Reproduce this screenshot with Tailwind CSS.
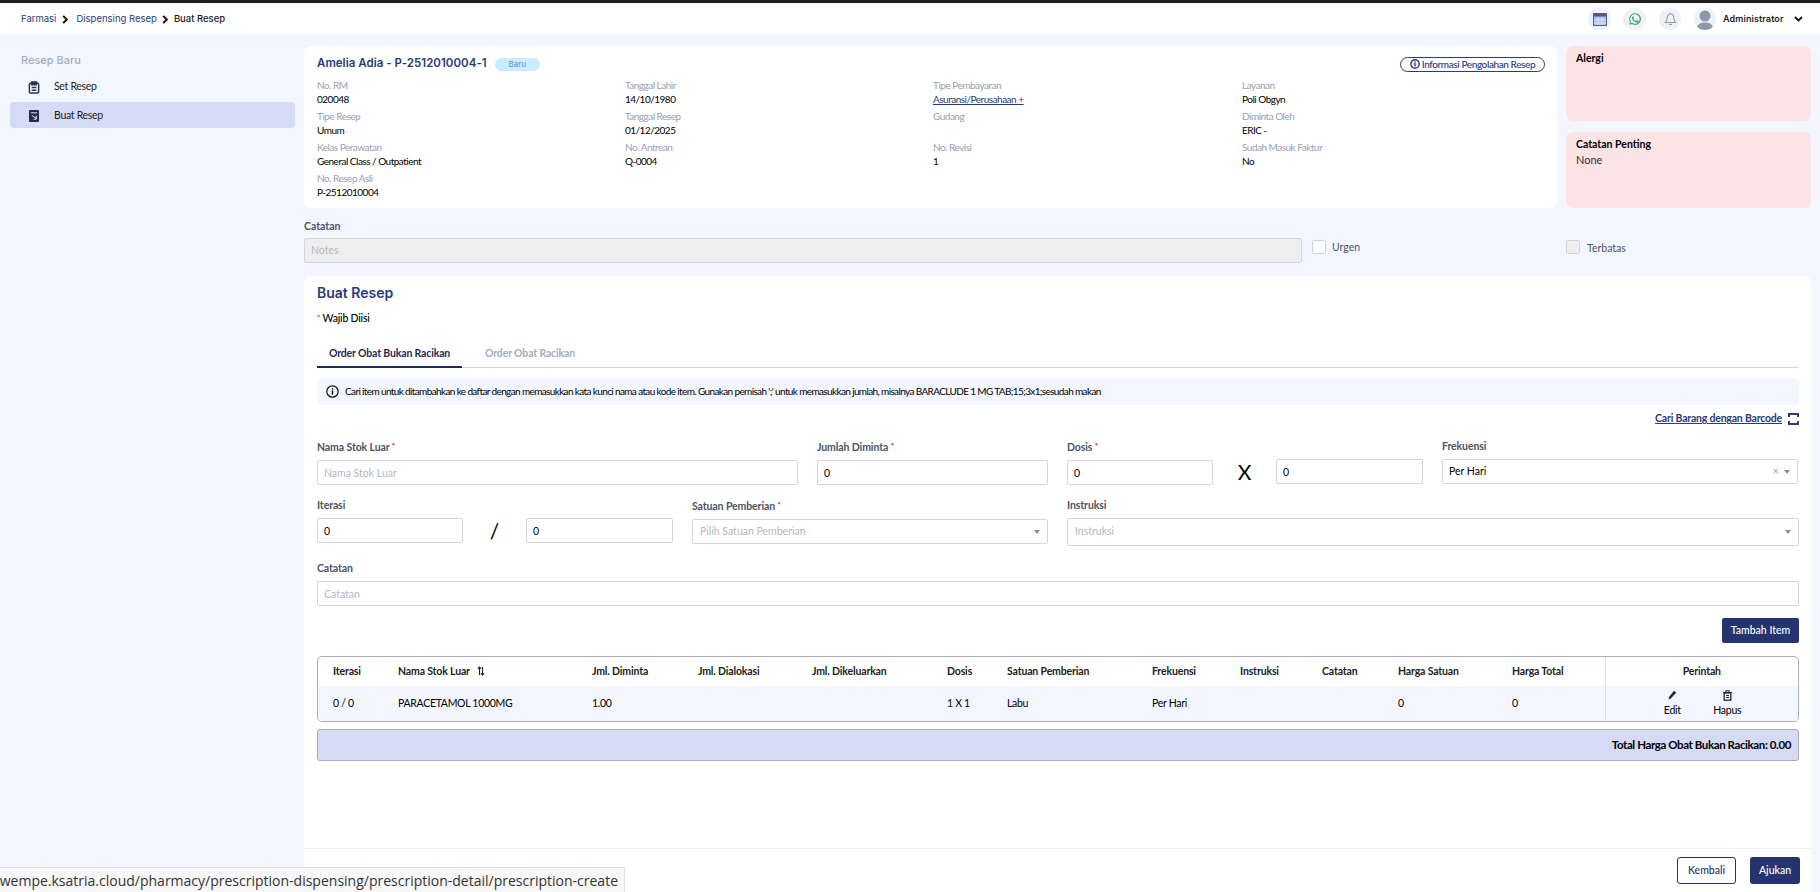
<!DOCTYPE html>
<html>
<head>
  <title>Buat Resep</title>
  <meta name="viewport" content="initial-scale=1, width=device-width">
  <script src="https://cdn.jsdelivr.net/npm/@tailwindcss/browser@4"></script>
</head>
<body class="h-screen w-screen overflow-hidden bg-[#f3f6fe] font-['Lato',sans-serif] text-[11px] text-black relative">
  <div class="h-[3px] bg-[#1f1f1f]"></div>
  <!-- top bar -->
  <header class="h-[32px] bg-white flex items-center justify-between pl-[21px] pr-[14px] font-['Inter',sans-serif] shadow-[0_1px_1px_rgba(0,0,0,0.03)]">
    <nav class="flex items-center text-[9.5px] text-[#2a3a7c]">
      <span>Farmasi</span>
      <svg class="w-[8px] h-[9px] ml-[5px] mr-[7px]" viewBox="0 0 8 10" fill="none" stroke="#111" stroke-width="2.2"><path d="M2 1l4 4-4 4"/></svg>
      <span>Dispensing Resep</span>
      <svg class="w-[8px] h-[9px] ml-[4px] mr-[5px]" viewBox="0 0 8 10" fill="none" stroke="#111" stroke-width="2.2"><path d="M2 1l4 4-4 4"/></svg>
      <span class="font-medium text-[#1c1c1c]">Buat Resep</span>
    </nav>
    <div class="flex items-center">
      <div class="w-[23px] h-[22px] rounded-full bg-[#eef1f6] flex items-center justify-center">
        <svg class="w-[14px] h-[13px]" viewBox="0 0 14 13"><rect x="0.5" y="0.5" width="13" height="12" fill="#a9bbf5" stroke="#59657f"/><rect x="0.5" y="0.5" width="13" height="3" fill="#4f5b78"/><path d="M5 4v8M9 4v8M1 7h12M1 10h12" stroke="#e7ecff"/></svg>
      </div>
      <div class="w-[23px] h-[22px] rounded-full bg-[#eef1f6] flex items-center justify-center ml-[12px]">
        <svg class="w-[14px] h-[14px]" viewBox="0 0 24 24" fill="#3fa66b"><path d="M12 2a10 10 0 0 0-8.6 15L2 22l5.2-1.4A10 10 0 1 0 12 2zm0 2a8 8 0 1 1-4.3 14.7l-.4-.2-3 .8.8-2.9-.2-.4A8 8 0 0 1 12 4zM8.6 7.5c-.3 0-.6.1-.9.5-.4.5-1 1.100-1 2.400s1 2.600 1.100 2.800c.2.200 2 3.100 4.800 4.200 2.400.9 2.900.7 3.400.7.500-.1 1.700-.7 1.900-1.400.200-.700.200-1.200.200-1.300-.1-.2-.3-.2-.6-.4l-2-.9c-.3-.1-.5-.2-.7.100l-.9 1.200c-.2.200-.4.200-.7.100-.3-.2-1.200-.5-2.300-1.400-.9-.8-1.400-1.700-1.600-2-.2-.3 0-.5.100-.6l.5-.6c.2-.2.200-.3.300-.5.100-.2 0-.4 0-.5l-.9-2.100c-.2-.5-.4-.5-.7-.5z"/></svg>
      </div>
      <div class="w-[22px] h-[22px] rounded-full bg-[#eef1f6] flex items-center justify-center ml-[13px]">
        <svg class="w-[13px] h-[14px]" viewBox="0 0 14 15" fill="none" stroke="#8d97a8" stroke-width="1.1"><path d="M7 2.200c-2.300 0-3.500 1.800-3.500 4 0 2.600-1 3.900-2 5h11c-1-1.100-2-2.400-2-5 0-2.200-1.200-4-3.500-4z"/><path d="M7 .8v1.400M5.500 12.800c.4.900 2.600.9 3 0"/></svg>
      </div>
      <div class="w-[22px] h-[22px] rounded-full bg-[#eef1f6] overflow-hidden ml-[13px]">
        <svg class="w-[22px] h-[22px]" viewBox="0 0 22 22" fill="#8d99a9"><circle cx="11" cy="8" r="5.500"/><path d="M2.500 22c0-5 3-7.500 8.500-7.500s8.500 2.500 8.500 7.500z"/></svg>
      </div>
      <span class="ml-[7px] text-[9px] font-semibold text-[#1c1c1c] tracking-[0.1px] w-[63px]">Administrator</span>
      <svg class="w-[9px] h-[6px] ml-[8px] mr-[3px]" viewBox="0 0 9 6" fill="none" stroke="#111" stroke-width="1.800"><path d="M1 1l3.500 3.500L8 1"/></svg>
    </div>
  </header>

  <div class="flex">
    <!-- sidebar -->
    <aside class="w-[304px] shrink-0 pl-[10px] pr-[9px] pt-[17px]">
      <div class="pl-[11px] font-['Inter',sans-serif] text-[11px] font-medium text-[#a3adc2] leading-[16px]">Resep Baru</div>
      <div class="mt-[3px] flex items-center h-[30px] pt-[2px] pl-[18px] text-[#1c1c1c] text-[10.500px] tracking-[-0.3px]">
        <svg class="w-[12px] h-[13px]" viewBox="0 0 13 14" fill="none" stroke="#2b3346" stroke-width="1.600"><rect x="1.500" y="2.500" width="10" height="10.500" rx="1"/><rect x="4" y="1" width="5" height="3" fill="#2b3346"/><path d="M4 7h5M4 10h5"/></svg>
        <span class="ml-[14px]">Set Resep</span>
      </div>
      <div class="mt-[1px] flex items-center h-[26px] pt-[2px] pl-[19px] rounded-[4px] bg-[#d6dbf5] text-[#1c1c1c] text-[10.500px] tracking-[-0.3px]">
        <svg class="w-[10px] h-[12px]" viewBox="0 0 11 13"><rect width="11" height="13" rx="1" fill="#1f2a4d"/><path d="M2 3h7M3 6l5 3M8 6v4H5" stroke="#fff" stroke-width="1" fill="none"/></svg>
        <span class="ml-[15px]">Buat Resep</span>
      </div>
    </aside>

    <main class="w-[1507px] shrink-0 pt-[11px]">
      <!-- patient summary -->
      <div class="flex gap-[9px] h-[162px]">
        <section class="w-[1253px] bg-white rounded-[7px] pt-[10px] px-[13px] relative">
          <div class="flex items-center h-[16px]">
            <h1 class="font-['Inter',sans-serif] text-[11.500px] font-semibold text-[#2a3a7c] tracking-[0.03px]">Amelia Adia - P-2512010004-1</h1>
            <span class="ml-[8px] w-[45px] h-[13px] rounded-full bg-[#c9ecff] text-[#5b8fd9] text-[8px] font-['Inter',sans-serif] flex items-center justify-center">Baru</span>
            <span class="ml-auto -mr-[1px] h-[15px] w-[145px] rounded-full border border-[#2a3a7c] text-[#2a3a7c] text-[10px] tracking-[-0.4px] font-medium flex items-center justify-center">
              <svg class="w-[10px] h-[10px] mr-[2px]" viewBox="0 0 10 10"><circle cx="5" cy="5" r="4.200" fill="none" stroke="#2a3a7c" stroke-width="1.400"/><rect x="4.300" y="4" width="1.400" height="3.500" fill="#2a3a7c"/><rect x="4.300" y="2.300" width="1.400" height="1.200" fill="#2a3a7c"/></svg>
              Informasi Pengolahan Resep
            </span>
          </div>
          <div class="grid grid-cols-[308px_308px_309px_1fr] auto-rows-[31px] mt-[6px] leading-[14px] text-[10px] tracking-[-0.5px]">
            <div><div class="text-[#97a1b3]">No. RM</div><div>020048</div></div>
            <div><div class="text-[#97a1b3]">Tanggal Lahir</div><div>14/10/1980</div></div>
            <div><div class="text-[#97a1b3]">Tipe Pembayaran</div><div class="underline text-[#2a3a7c]">Asuransi/Perusahaan +</div></div>
            <div><div class="text-[#97a1b3]">Layanan</div><div>Poli Obgyn</div></div>
            <div><div class="text-[#97a1b3]">Tipe Resep</div><div>Umum</div></div>
            <div><div class="text-[#97a1b3]">Tanggal Resep</div><div>01/12/2025</div></div>
            <div><div class="text-[#97a1b3]">Gudang</div></div>
            <div><div class="text-[#97a1b3]">Diminta Oleh</div><div>ERIC -</div></div>
            <div><div class="text-[#97a1b3]">Kelas Perawatan</div><div>General Class / Outpatient</div></div>
            <div><div class="text-[#97a1b3]">No. Antrean</div><div>Q-0004</div></div>
            <div><div class="text-[#97a1b3]">No. Revisi</div><div>1</div></div>
            <div><div class="text-[#97a1b3]">Sudah Masuk Faktur</div><div>No</div></div>
            <div><div class="text-[#97a1b3]">No. Resep Asli</div><div>P-2512010004</div></div>
          </div>
        </section>
        <div class="w-[245px] flex flex-col gap-[11px]">
          <div class="h-[75px] rounded-[7px] bg-[#fde4e4] pt-[5px] px-[10px] font-bold text-[10.500px] leading-[14px]">Alergi</div>
          <div class="h-[76px] rounded-[7px] bg-[#fde4e4] pt-[5px] px-[10px] leading-[14px]">
            <div class="font-bold text-[10.500px]">Catatan Penting</div>
            <div class="mt-[2px] text-[#3a2b2b]">None</div>
          </div>
        </div>
      </div>

      <!-- notes row -->
      <div class="mt-[10px] flex">
        <div class="w-[998px]">
          <label class="block text-[#4b5563] font-bold text-[10.500px] leading-[16px]">Catatan</label>
          <div class="mt-[4px] h-[25px] pt-[1px] rounded-[2px] border border-[#d4d6da] bg-[#eeeeee] pl-[6px] flex items-center text-[#b4b8bf] text-[10.500px]">Notes</div>
        </div>
        <div class="w-[264px] pl-[10px] pt-[22px] flex items-start">
          <span class="w-[14px] h-[14px] rounded-[2px] border border-[#cfd3da] bg-white"></span>
          <span class="ml-[6px] text-[#4b5563] text-[10.500px] leading-[14px]">Urgen</span>
        </div>
        <div class="pt-[22px] flex items-start">
          <span class="w-[14px] h-[14px] rounded-[2px] border border-[#d0d3d8] bg-[#eeeeee]"></span>
          <span class="ml-[7px] text-[#4b5563] text-[10.500px] leading-[14px] pt-[1px]">Terbatas</span>
        </div>
      </div>

      <!-- form card -->
      <section class="mt-[13px] bg-white rounded-t-[7px] w-[1507px] h-[572px] px-[13px] pt-[8px]">
        <h2 class="font-['Inter',sans-serif] text-[14px] font-semibold text-[#2a3a7c] leading-[17px]">Buat Resep</h2>
        <p class="mt-[10px] text-[10.500px] font-medium leading-[14px] tracking-[-0.2px]"><span class="text-red-600 text-[8px] align-[1px]">*</span> Wajib Diisi</p>
        <div class="mt-[18px] flex h-[25px] border-b border-[#d4d6da] w-[1482px] font-bold text-[10.500px] tracking-[-0.15px]">
          <div class="w-[145px] h-[25px] border-b-2 border-[#1f2a55] text-center text-[#1f2a55] pt-[3px]">Order Obat Bukan Racikan</div>
          <div class="ml-[23px] text-[#a3adbd] pt-[3px]">Order Obat Racikan</div>
        </div>

        <div class="mt-[10px] w-[1482px] h-[27px] rounded-[5px] bg-[#f3f6fe] flex items-center pl-[9px] text-[10px] tracking-[-0.63px]">
          <svg class="w-[13px] h-[13px]" viewBox="0 0 13 13"><circle cx="6.500" cy="6.500" r="5.700" fill="none" stroke="#111" stroke-width="1.200"/><rect x="5.800" y="5.500" width="1.400" height="4.200"/><rect x="5.800" y="3.200" width="1.400" height="1.400"/></svg>
          <span class="ml-[6px]">Cari item untuk ditambahkan ke daftar dengan memasukkan kata kunci nama atau kode item. Gunakan pemisah ';' untuk memasukkan jumlah, misalnya BARACLUDE 1 MG TAB;15;3x1;sesudah makan</span>
        </div>

        <div class="mt-[7px] w-[1482px] flex justify-end items-center h-[14px]">
          <span class="underline text-[#2a3a7c] font-bold text-[10.500px] tracking-[-0.2px]">Cari Barang dengan Barcode</span>
          <svg class="w-[11px] h-[12px] ml-[6px]" viewBox="0 0 11 12" fill="none" stroke="#2a3a7c" stroke-width="2"><path d="M1 4V1h9v3M1 8v3h9V8"/></svg>
        </div>

        <!-- row 1 -->
        <div class="mt-[13px] w-[1482px] flex text-[10.500px]">
          <div class="w-[481px]">
            <label class="block font-bold text-[#4b5563] leading-[14px] tracking-[-0.1px]">Nama Stok Luar <span class="text-red-600 text-[8px] align-[2px]">*</span></label>
            <input class="mt-[6px] w-full h-[25px] border border-[#d4d6da] rounded-[2px] px-[6px] placeholder:text-[#b4b8bf]" placeholder="Nama Stok Luar">
          </div>
          <div class="w-[231px] ml-[19px]">
            <label class="block font-bold text-[#4b5563] leading-[14px] tracking-[-0.1px]">Jumlah Diminta <span class="text-red-600 text-[8px] align-[2px]">*</span></label>
            <input class="mt-[6px] w-full h-[25px] border border-[#d4d6da] rounded-[2px] px-[6px]" value="0">
          </div>
          <div class="w-[146px] ml-[19px]">
            <label class="block font-bold text-[#4b5563] leading-[14px] tracking-[-0.1px]">Dosis <span class="text-red-600 text-[8px] align-[2px]">*</span></label>
            <input class="mt-[6px] w-full h-[25px] border border-[#d4d6da] rounded-[2px] px-[6px]" value="0">
          </div>
          <div class="w-[63px] pt-[20px] text-center text-[21px] leading-[25px]">X</div>
          <div class="w-[147px] pt-[20px]">
            <input class="w-full h-[25px] border border-[#d4d6da] rounded-[2px] px-[6px]" value="0">
          </div>
          <div class="w-[356px] ml-[19px]">
            <label class="block font-bold text-[#4b5563] leading-[14px] tracking-[-0.1px]">Frekuensi</label>
            <div class="mt-[6px] h-[25px] border border-[#d4d6da] rounded-[2px] pl-[6px] pr-[7px] flex items-center">
              <span>Per Hari</span>
              <span class="ml-auto text-[#a3a8b0] text-[11px]">×</span>
              <span class="ml-[5px] w-0 h-0 border-x-[3px] border-x-transparent border-t-[4px] border-t-[#8b8f96]"></span>
            </div>
          </div>
        </div>

        <!-- row 2 -->
        <div class="mt-[13px] w-[1482px] flex text-[10.500px]">
          <div class="w-[146px]">
            <label class="block font-bold text-[#4b5563] leading-[14px] tracking-[-0.1px]">Iterasi</label>
            <input class="mt-[6px] w-full h-[25px] border border-[#d4d6da] rounded-[2px] px-[6px]" value="0">
          </div>
          <div class="w-[63px] pt-[20px] text-center text-[21px] leading-[25px]">/</div>
          <div class="w-[147px] pt-[20px]">
            <input class="w-full h-[25px] border border-[#d4d6da] rounded-[2px] px-[6px]" value="0">
          </div>
          <div class="w-[356px] ml-[19px]">
            <label class="block font-bold text-[#4b5563] leading-[14px] tracking-[-0.1px]">Satuan Pemberian <span class="text-red-600 text-[8px] align-[2px]">*</span></label>
            <div class="mt-[6px] h-[25px] border border-[#d4d6da] rounded-[2px] pl-[7px] pr-[7px] flex items-center text-[#b4b8bf]">
              <span>Pilih Satuan Pemberian</span>
              <span class="ml-auto w-0 h-0 border-x-[3px] border-x-transparent border-t-[4px] border-t-[#8b8f96]"></span>
            </div>
          </div>
          <div class="w-[732px] ml-[19px]">
            <label class="block font-bold text-[#4b5563] leading-[14px] tracking-[-0.1px]">Instruksi</label>
            <div class="mt-[6px] h-[28px] border border-[#d4d6da] rounded-[2px] pl-[7px] pr-[7px] flex items-center text-[#b4b8bf]">
              <span>Instruksi</span>
              <span class="ml-auto w-0 h-0 border-x-[3px] border-x-transparent border-t-[4px] border-t-[#8b8f96]"></span>
            </div>
          </div>
        </div>

        <!-- row 3 -->
        <div class="mt-[15px] w-[1482px] text-[10.500px]">
          <label class="block font-bold text-[#4b5563] leading-[14px] tracking-[-0.1px]">Catatan</label>
          <input class="mt-[6px] w-full h-[25px] border border-[#d4d6da] rounded-[2px] px-[6px] placeholder:text-[#b4b8bf]" placeholder="Catatan">
        </div>

        <div class="mt-[12px] w-[1482px] flex justify-end">
          <button class="w-[77px] h-[25px] bg-[#25346f] rounded-[2px] text-white text-[10.500px] font-medium">Tambah Item</button>
        </div>

        <!-- items table -->
        <div class="mt-[13px] w-[1482px] h-[66px] border border-[#a9adb8] rounded-[5px] overflow-hidden">
          <table class="table-fixed w-full text-[10.500px] text-left">
            <colgroup>
              <col class="w-[65px]"><col class="w-[194px]"><col class="w-[106px]"><col class="w-[114px]"><col class="w-[135px]"><col class="w-[60px]"><col class="w-[145px]"><col class="w-[88px]"><col class="w-[82px]"><col class="w-[76px]"><col class="w-[114px]"><col class="w-[108px]"><col>
            </colgroup>
            <thead>
              <tr class="h-[29px] font-bold text-[#222] tracking-[-0.15px]">
                <th class="pl-[15px] font-bold">Iterasi</th>
                <th class="pl-[15px] font-bold">Nama Stok Luar
                  <svg class="inline w-[8px] h-[10px] ml-[5px] align-[-1px]" viewBox="0 0 8 10" fill="none" stroke="#222" stroke-width="1.100"><path d="M2.500 9V1M.8 2.700L2.500 1l1.700 1.700M5.500 1v8M3.800 7.300L5.500 9l1.700-1.700"/></svg>
                </th>
                <th class="pl-[15px] font-bold">Jml. Diminta</th>
                <th class="pl-[15px] font-bold">Jml. Dialokasi</th>
                <th class="pl-[15px] font-bold">Jml. Dikeluarkan</th>
                <th class="pl-[15px] font-bold">Dosis</th>
                <th class="pl-[15px] font-bold">Satuan Pemberian</th>
                <th class="pl-[15px] font-bold">Frekuensi</th>
                <th class="pl-[15px] font-bold">Instruksi</th>
                <th class="pl-[15px] font-bold">Catatan</th>
                <th class="pl-[15px] font-bold">Harga Satuan</th>
                <th class="pl-[15px] font-bold">Harga Total</th>
                <th class="border-l border-[#dcdfe5] text-center font-bold">Perintah</th>
              </tr>
            </thead>
            <tbody class="tracking-[-0.3px]">
              <tr class="h-[35px] bg-[#f3f6fe]">
                <td class="pl-[15px]">0 / 0</td>
                <td class="pl-[15px]">PARACETAMOL 1000MG</td>
                <td class="pl-[15px]">1.00</td>
                <td class="pl-[15px]"></td>
                <td class="pl-[15px]"></td>
                <td class="pl-[15px]">1 X 1</td>
                <td class="pl-[15px]">Labu</td>
                <td class="pl-[15px]">Per Hari</td>
                <td class="pl-[15px]"></td>
                <td class="pl-[15px]"></td>
                <td class="pl-[15px]">0</td>
                <td class="pl-[15px]">0</td>
                <td class="border-l border-[#dcdfe5]">
                  <div class="flex justify-center gap-[28px] pr-[1px]">
                    <div class="w-[24px] flex flex-col items-center">
                      <svg class="w-[9px] h-[10px]" viewBox="0 0 9 10" fill="#1f2937"><path d="M6 .8l2.200 2-5.400 5.700L.5 9.500l.7-2.700z"/></svg>
                      <span class="mt-[4px] leading-[13px]">Edit</span>
                    </div>
                    <div class="w-[30px] flex flex-col items-center">
                      <svg class="w-[9px] h-[11px]" viewBox="0 0 9 11" fill="none" stroke="#1f2937" stroke-width="1.100"><path d="M0 2.500h9M3 2.500V.8h3v1.700"/><rect x="1.200" y="3" width="6.600" height="7.200" stroke-width="1.300"/><path d="M3 5.500h3M3 7.500h3"/></svg>
                      <span class="mt-[3px] leading-[13px]">Hapus</span>
                    </div>
                  </div>
                </td>
              </tr>
            </tbody>
          </table>
        </div>
        <div class="mt-[7px] w-[1482px] h-[32px] rounded-[3px] border border-[#a9adb8] bg-[#d6dbf5] flex items-center justify-end pr-[7px] font-bold text-[11.500px] tracking-[-0.4px]">Total Harga Obat Bukan Racikan: 0.00</div>
      </section>
    </main>
  </div>

  <!-- footer actions -->
  <footer class="absolute left-[304px] w-[1507px] bottom-0 h-[44px] bg-white border-t border-[#f0f1f4] flex items-start justify-end pt-[8px] pr-[11px] gap-[14px]">
    <button class="w-[59px] h-[27px] border border-[#25346f] rounded-[3px] text-[#25346f] text-[10.500px] font-medium">Kembali</button>
    <button class="w-[50px] h-[27px] bg-[#25346f] rounded-[3px] text-white text-[10.500px] font-medium">Ajukan</button>
  </footer>

  <!-- browser link preview -->
  <div class="absolute left-0 bottom-0 w-[625px] h-[25px] bg-[#f7f7f7] border-t border-r border-[#dedede] flex items-center justify-end pr-[6px] overflow-hidden font-['Open_Sans',sans-serif] text-[14px] text-[#333] whitespace-nowrap">wempe.ksatria.cloud/pharmacy/prescription-dispensing/prescription-detail/prescription-create</div>
</body>
</html>
